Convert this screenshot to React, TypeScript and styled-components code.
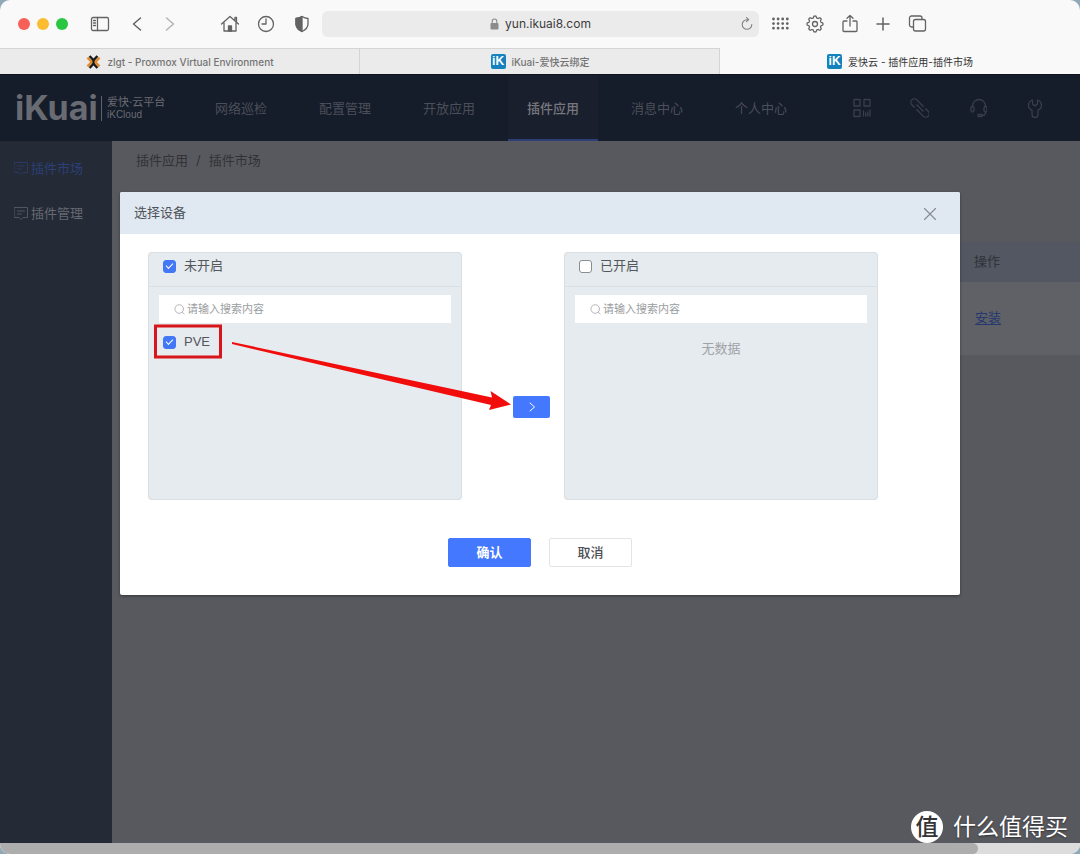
import React from "react";
import styled, { createGlobalStyle, css } from "styled-components";

const sans = `Inter, "Noto Sans CJK SC", sans-serif`;

const GlobalStyle = createGlobalStyle`
  *, *::before, *::after { box-sizing: border-box; }
  body { margin: 0; background: #8fa9b8; font-family: ${sans}; font-size: 13px; }
  button, input { font-family: inherit; }
  button { border: 0; padding: 0; background: none; cursor: pointer; }
  svg { display: block; }
`;

const Window = styled.div`
  display: flex;
  flex-direction: column;
  min-height: 100vh;
  border-radius: 10px;
  overflow: hidden;
  background: #f9f9f9;
`;

/* ---------- browser chrome ---------- */

const Toolbar = styled.header`
  display: flex;
  align-items: center;
  height: 48px;
  padding: 0 153px 0 18px;
`;

const Lights = styled.div`
  display: flex;
  gap: 7px;
  margin-right: 22px;
`;

const Light = styled.button<{ $color: string }>`
  width: 12px;
  height: 12px;
  border-radius: 50%;
  background: ${(p) => p.$color};
`;

const ToolGroup = styled.div<{ $gap: number; $before?: number }>`
  display: flex;
  gap: ${(p) => p.$gap}px;
  margin-left: ${(p) => p.$before ?? 0}px;
`;

const ToolButton = styled.button<{ $faded?: boolean }>`
  width: 20px;
  height: 20px;
  color: ${(p) => (p.$faded ? "#b4b4b4" : "#636363")};
`;

const UrlBar = styled.div`
  flex: 1;
  display: grid;
  grid-template-columns: 1fr auto 1fr;
  align-items: center;
  height: 26px;
  margin: 0 12px 0 10px;
  border-radius: 6px;
  background: #ebebeb;
`;

const Address = styled.label`
  grid-column: 2;
  display: flex;
  align-items: center;
  gap: 6px;
`;

const AddressInput = styled.input`
  field-sizing: content;
  padding: 0;
  border: 0;
  outline: 0;
  background: none;
  color: #3c3c3c;
  font-size: 12px;
  line-height: 16px;
`;

const Reload = styled.button`
  justify-self: end;
  width: 14px;
  height: 14px;
  margin-right: 5px;
  color: #808080;
`;

const TabStrip = styled.nav`
  display: flex;
  height: 27px;
  border-bottom: 1px solid #10131d;
`;

const BrowserTab = styled.button<{ $active?: boolean }>`
  flex: 1;
  display: flex;
  align-items: center;
  justify-content: center;
  gap: 6px;
  border-top: 1px solid transparent;
  font-size: 10px;
  line-height: 16px;
  ${(p) =>
    p.$active
      ? css`
          color: #333;
        `
      : css`
          color: #747474;
          font-weight: 500;
          background: #ebebeb;
          border-top-color: #d4d4d4;
          box-shadow: inset -1px 0 #d4d4d4;
        `}
`;

const Favicon = styled.span`
  display: grid;
  place-items: center;
  width: 15px;
  height: 15px;
  border-radius: 2px;
  background: #1483bd;
  color: #fff;
  font: 700 12px/15px "Liberation Sans", sans-serif;
`;

/* ---------- site ---------- */

const Site = styled.div`
  position: relative;
  flex: 1;
  display: flex;
  flex-direction: column;
  background: #58595e;
`;

const TopBar = styled.div`
  display: flex;
  align-items: center;
  height: 66px;
  padding: 0 35px 0 15px;
  background: #151c2a;
`;

const Brand = styled.a`
  display: flex;
  align-items: center;
  width: 181px;
  color: #696b72;
  text-decoration: none;
`;

const Wordmark = styled.span`
  width: 82px;
  font-size: 34px;
  font-weight: 700;
  line-height: 34px;
`;

const BrandText = styled.span`
  display: flex;
  flex-direction: column;
  padding-left: 5px;
  margin-left: 4px;
  border-left: 1px solid #5f626a;
  font-size: 11px;
  line-height: 13px;
`;

const BrandLatin = styled.span`
  font: 10px/12px "Liberation Sans", sans-serif;
`;

const MainNav = styled.nav`
  display: flex;
  align-self: stretch;
  gap: 14px;
`;

const NavLink = styled.a<{ $active?: boolean }>`
  width: 90px;
  padding-top: 1px;
  border-bottom: 2px solid ${(p) => (p.$active ? "#2d3f75" : "transparent")};
  background: ${(p) => (p.$active ? "#1a1f2e" : "none")};
  color: ${(p) => (p.$active ? "#76777d" : "#4b4f59")};
  font-weight: ${(p) => (p.$active ? 500 : 400)};
  line-height: 64px;
  text-align: center;
  text-decoration: none;
`;

const Shortcuts = styled.div`
  display: flex;
  gap: 38px;
  margin-left: auto;
`;

const Shortcut = styled.button`
  width: 20px;
  height: 20px;
  color: #3a3f4a;
`;

const Columns = styled.div`
  flex: 1;
  display: flex;
`;

const SideBar = styled.nav`
  display: flex;
  flex-direction: column;
  gap: 25px;
  width: 112px;
  padding: 17px 0 0 13px;
  background: #242a36;
`;

const SideLink = styled.a<{ $active?: boolean }>`
  display: flex;
  align-items: center;
  gap: 2px;
  color: ${(p) => (p.$active ? "#2b4077" : "#666971")};
  line-height: 20px;
  text-decoration: none;

  svg {
    opacity: 0.7;
  }
`;

const Content = styled.main`
  flex: 1;
  padding: 9px 0 0 24px;
`;

const Crumbs = styled.nav`
  display: flex;
  gap: 8px;
  color: #303237;
  line-height: 20px;
`;

const CrumbLink = styled.a`
  color: inherit;
  text-decoration: none;
`;

const PluginTable = styled.table`
  width: 100%;
  margin-top: 72px;
  border-collapse: collapse;
  text-align: left;
`;

const HeadCell = styled.th`
  width: 106px;
  height: 40px;
  padding: 0 0 4px;
  background: #525762;
  color: #303339;
  font-weight: 400;
`;

const Cell = styled.td`
  height: 73px;
  padding: 0 0 4px 1px;
  background: #606166;
`;

const FillHead = styled(HeadCell)`
  width: auto;
`;

const InstallLink = styled.a`
  color: #25386f;
  text-underline-offset: 2px;
`;

/* ---------- dialog ---------- */

const DialogLayer = styled.div`
  position: absolute;
  inset: 0;
  padding-top: 117px;
`;

const Dialog = styled.section`
  width: min(840px, 100% - 40px);
  margin: 0 auto;
  border-radius: 2px;
  overflow: hidden;
  background: #fff;
  box-shadow: 0 1px 3px rgba(0, 0, 0, 0.4);
`;

const DialogHead = styled.header`
  display: flex;
  align-items: flex-start;
  justify-content: space-between;
  height: 42px;
  padding: 10px 23px 0 14px;
  background: #e0e8f2;
`;

const DialogTitle = styled.h2`
  margin: 0;
  color: #4f5257;
  font-size: 13px;
  font-weight: 400;
  line-height: 20px;
`;

const Close = styled.button`
  width: 14px;
  height: 14px;
  margin-top: 5px;
  color: #858b94;
`;

const DialogBody = styled.div`
  padding: 18px 28px 28px;
`;

const Transfer = styled.div`
  position: relative;
  display: flex;
`;

const Panel = styled.fieldset`
  flex: 0 1 314px;
  min-width: 0;
  height: 248px;
  margin: 0;
  padding: 0;
  border: 1px solid #d9dee2;
  border-radius: 4px;
  background: #e6ebef;
`;

const PanelHead = styled.div`
  height: 34px;
  padding: 3px 14px 0;
  border-bottom: 1px solid #d9dfe3;
`;

const CheckLabel = styled.label`
  display: flex;
  align-items: center;
  gap: 8px;
  color: #53565b;
  font-family: "Liberation Sans", "Noto Sans CJK SC", sans-serif;
  line-height: 20px;
`;

const CheckBox = styled.input`
  appearance: none;
  display: grid;
  place-items: center;
  width: 13px;
  height: 13px;
  margin: 0;
  border: 1px solid #8a8d92;
  border-radius: 3px;
  background: #fff;

  &:checked {
    border-color: #4277f5;
    background: #4277f5;
  }

  &:checked::after {
    content: "";
    width: 7px;
    height: 4px;
    margin-bottom: 2px;
    border: solid #fff;
    border-width: 0 0 1px 1px;
    transform: rotate(-45deg);
  }
`;

const SearchBox = styled.label`
  display: flex;
  align-items: center;
  gap: 2px;
  height: 28px;
  margin: 8px 10px 0;
  padding: 0 15px;
  background: #fff;
  color: #b4b7bb;
`;

const SearchInput = styled.input`
  flex: 1;
  min-width: 0;
  padding: 0;
  border: 0;
  outline: 0;
  font-size: 11px;
  line-height: 16px;

  &::placeholder {
    color: #9a9da1;
  }
`;

const Options = styled.div`
  padding: 9px 14px;
`;

const Empty = styled.p`
  margin: 15px 0 0;
  color: #a0a3a7;
  line-height: 20px;
  text-align: center;
`;

const MoveColumn = styled.div`
  flex: 0 0 102px;
  padding: 144px 0 0 51px;
`;

const MoveButton = styled.button`
  display: grid;
  place-items: center;
  width: 37px;
  height: 22px;
  border-radius: 2px;
  background: #4378ff;
  color: #fff;
`;

const Actions = styled.footer`
  display: flex;
  justify-content: center;
  gap: 18px;
  margin-top: 38px;
`;

const ActionButton = styled.button<{ $primary?: boolean }>`
  width: 83px;
  height: 29px;
  padding-bottom: 2px;
  border: 1px solid ${(p) => (p.$primary ? "#4378ff" : "#e3e4e6")};
  border-radius: 2px;
  background: ${(p) => (p.$primary ? "#4378ff" : "#fff")};
  color: ${(p) => (p.$primary ? "#fff" : "#4b4e53")};
  font-size: 13px;
  font-weight: ${(p) => (p.$primary ? 700 : 500)};
  line-height: 20px;
`;

const Callout = styled.svg`
  position: absolute;
  left: 0;
  top: 0;
  pointer-events: none;
`;

/* ---------- bottom of the window ---------- */

const Watermark = styled.div`
  position: absolute;
  right: 12px;
  bottom: 0;
  display: flex;
  align-items: center;
  gap: 10px;
  color: #fff;
  font-size: 23px;
  line-height: 32px;
  text-shadow: 0 1px 2px rgba(0, 0, 0, 0.5);
`;

const WatermarkBadge = styled.span`
  width: 32px;
  height: 32px;
  border-radius: 50%;
  background: #fff;
  color: #333;
  font-weight: 500;
  text-align: center;
  text-shadow: none;
`;

const ScrollTrack = styled.div`
  height: 11px;
  background: #dcdcdc;
`;

const ScrollThumb = styled.div`
  width: calc(100% - 102px);
  height: 11px;
  border-radius: 0 6px 6px 0;
  background: #adadad;
`;

/* ---------- drawings ---------- */

type IconProps = { children: React.ReactNode; size?: number; width?: number };

const Icon = ({ children, size = 20, width = 1.3 }: IconProps) => (
  <svg
    width={size}
    height={size}
    viewBox={`0 0 ${size} ${size}`}
    fill="none"
    stroke="currentColor"
    strokeWidth={width}
    strokeLinecap="round"
    strokeLinejoin="round"
    aria-hidden="true"
  >
    {children}
  </svg>
);

const gearPath = (() => {
  const steps = 96;
  const points: string[] = [];
  for (let i = 0; i < steps; i++) {
    const a = (i / steps) * Math.PI * 2;
    const r = 7.1 + 0.9 * Math.tanh(2.4 * Math.cos(a * 8));
    points.push(`${(10 + r * Math.cos(a)).toFixed(2)} ${(10 + r * Math.sin(a)).toFixed(2)}`);
  }
  return `M${points.join("L")}Z`;
})();

const ProxmoxMark = () => (
  <svg width="15" height="14" viewBox="0 0 15 14" fill="none" aria-hidden="true">
    <path d="M1.500 2.600 5.700 7 1.500 11.400M13.500 2.600 9.300 7l4.200 4.400" stroke="#e08a2c" strokeWidth="2.400" />
    <path d="M3.600 1 7.500 5.200 11.400 1M3.600 13l3.900-4.200L11.400 13" stroke="#1a1a1a" strokeWidth="2.400" />
    <path d="M7.500 4.500v5" stroke="#1a1a1a" strokeWidth="2" />
  </svg>
);

const NoteIcon = () => (
  <Icon size={16} width={1}>
    <path d="M1.500 2.500h13v10H10L8 14.500l-2-2H1.500zM4.500 6h7M4.500 9h4" />
  </Icon>
);

const Magnifier = () => (
  <Icon size={11} width={1}>
    <circle cx="5.200" cy="5" r="4.300" />
    <path d="m8.500 8.300 1.700 1.800" />
  </Icon>
);

/* ---------- data ---------- */

const navItems = ["网络巡检", "配置管理", "开放应用", "插件应用", "消息中心", "个人中心"];

const shortcuts = [
  {
    name: "二维码",
    art: (
      <path d="M3 1.500h6V8H3zM13 1.500h6V8h-6zM3 12h6v6.500H3zM12.500 13v5M14.700 15v3M16.800 14v4M19 12v6" />
    ),
  },
  {
    name: "链接",
    art: (
      <g transform="translate(1 0) rotate(45 10 10)">
        <path d="M11 6.500H2a3.500 3.500 0 0 0 0 7h3.500" />
        <path d="M9 13.500h9a3.500 3.500 0 0 0 0-7h-3.500" />
        <path d="M5.500 10h9" />
      </g>
    ),
  },
  {
    name: "客服",
    art: (
      <g transform="translate(2 0)">
        <path d="M3.500 8a6.500 6.500 0 0 1 13 0M3.500 8.500a1.500 1.500 0 0 0-1.500 1.500v2.500a1.500 1.500 0 0 0 3 0V10a1.500 1.500 0 0 0-1.500-1.500zM16.500 8.500A1.500 1.500 0 0 0 15 10v2.500a1.500 1.500 0 0 0 3 0V10a1.500 1.500 0 0 0-1.500-1.500zM16.500 14.500c0 2-1.500 3-3.500 3M9 16.500h4v2H9z" />
      </g>
    ),
  },
  {
    name: "工具",
    art: (
      <path d="M7.500 2v4l2.500 2 2.500-2V2c2.500 1 4 3 4 5.200 0 2.300-1.300 4-3.500 5v4.300a3 3 0 0 1-6 0v-4.300c-2.200-1-3.500-2.700-3.500-5C3.500 5 5 3 7.500 2z" />
    ),
  },
];

const PanelSearch = ({ name }: { name: string }) => (
  <SearchBox>
    <Magnifier />
    <SearchInput type="search" aria-label={name} placeholder="请输入搜索内容" />
  </SearchBox>
);

export default function App() {
  return (
    <Window>
      <GlobalStyle />
      <Toolbar>
        <Lights>
          <Light $color="#f75f58" aria-label="关闭窗口" />
          <Light $color="#fbbc2f" aria-label="最小化" />
          <Light $color="#2bc640" aria-label="全屏" />
        </Lights>
        <ToolGroup $gap={15}>
          <ToolButton aria-label="边栏">
            <Icon>
              <rect x="1.500" y="3.500" width="17" height="13" rx="1.500" />
              <path d="M7.500 3.500v13M3.500 6.500h2M3.500 9h2M3.500 11.500h2" />
            </Icon>
          </ToolButton>
          <ToolButton aria-label="后退">
            <Icon width={1.5}>
              <path d="m15.500 4-7 6 7 6" />
            </Icon>
          </ToolButton>
          <ToolButton $faded aria-label="前进">
            <Icon width={1.5}>
              <path d="m6.500 4 7 6-7 6" />
            </Icon>
          </ToolButton>
        </ToolGroup>
        <ToolGroup $gap={16} $before={40}>
          <ToolButton aria-label="主页">
            <Icon>
              <path d="M1.500 10 10 2.500l8.500 7.500M4 8.500v8.500h12V8.500M15 6.500v-3h1.500V8" />
              <path d="M8.500 17v-5h3v5z" fill="currentColor" />
            </Icon>
          </ToolButton>
          <ToolButton aria-label="历史记录">
            <Icon>
              <circle cx="10" cy="10" r="7.500" />
              <path d="M10 5v5H6" />
            </Icon>
          </ToolButton>
          <ToolButton aria-label="隐私报告">
            <Icon>
              <path d="M10 2.500c2 1.200 4 1.800 6 2V10c0 3.500-2.500 5.800-6 7.500C6.500 15.800 4 13.500 4 10V4.500c2-.2 4-.8 6-2z" />
              <path d="M10 2.500v15C6.500 15.800 4 13.500 4 10V4.500c2-.2 4-.8 6-2z" fill="currentColor" />
            </Icon>
          </ToolButton>
        </ToolGroup>
        <UrlBar>
          <Address>
            <svg width="9" height="12" viewBox="0 0 9 12" aria-hidden="true">
              <rect x="0.500" y="5" width="8" height="6.500" rx="1" fill="#8b8b8b" />
              <path d="M2.200 5V3.300a2.300 2.300 0 0 1 4.600 0V5" fill="none" stroke="#8b8b8b" strokeWidth="1.100" />
            </svg>
            <AddressInput aria-label="地址" defaultValue="yun.ikuai8.com" />
          </Address>
          <Reload aria-label="重新载入">
            <Icon size={14} width={1.1}>
              <path d="M11.800 7.500A4.800 4.800 0 1 1 7 2.700h1.500M6.500.7l2.200 2-2.200 2" />
            </Icon>
          </Reload>
        </UrlBar>
        <ToolGroup $gap={14}>
          <ToolButton aria-label="网格">
            <Icon width={2.8}>
              <path d="M2.500 5h0M7.100 5h0M11.700 5h0M16.300 5h0M2.500 9.600h0M7.100 9.600h0M11.700 9.600h0M16.300 9.600h0M2.500 14.200h0M7.100 14.200h0M11.700 14.200h0M16.300 14.200h0" />
            </Icon>
          </ToolButton>
          <ToolButton aria-label="设置">
            <Icon>
              <path d={gearPath} />
              <circle cx="10" cy="10" r="2.500" />
            </Icon>
          </ToolButton>
          <ToolButton aria-label="共享">
            <Icon>
              <path d="M8 7H5a1 1 0 0 0-1 1v8.500a1 1 0 0 0 1 1h12a1 1 0 0 0 1-1V8a1 1 0 0 0-1-1h-3M11 12V1.500M8 4.200l3-2.800 3 2.800" />
            </Icon>
          </ToolButton>
          <ToolButton aria-label="新建标签页">
            <Icon width={1.5}>
              <path d="M10 4v12M4 10h12" />
            </Icon>
          </ToolButton>
          <ToolButton aria-label="标签页概览">
            <Icon>
              <rect x="6.500" y="5.500" width="12" height="11.500" rx="2" />
              <path d="M6.500 13h-2a2 2 0 0 1-2-2V4a2 2 0 0 1 2-2H13a2 2 0 0 1 2 2v1.500" />
            </Icon>
          </ToolButton>
        </ToolGroup>
      </Toolbar>
      <TabStrip>
        <BrowserTab>
          <ProxmoxMark />
          zlgt - Proxmox Virtual Environment
        </BrowserTab>
        <BrowserTab>
          <Favicon>iK</Favicon>
          iKuai-爱快云绑定
        </BrowserTab>
        <BrowserTab $active>
          <Favicon>iK</Favicon>
          爱快云 - 插件应用-插件市场
        </BrowserTab>
      </TabStrip>

      <Site>
        <TopBar>
          <Brand href="#">
            <Wordmark>iKuai</Wordmark>
            <BrandText>
              爱快·云平台
              <BrandLatin>iKCloud</BrandLatin>
            </BrandText>
          </Brand>
          <MainNav>
            {navItems.map((item) => (
              <NavLink key={item} href="#" $active={item === "插件应用"}>
                {item}
              </NavLink>
            ))}
          </MainNav>
          <Shortcuts>
            {shortcuts.map((s) => (
              <Shortcut key={s.name} aria-label={s.name}>
                <Icon>{s.art}</Icon>
              </Shortcut>
            ))}
          </Shortcuts>
        </TopBar>
        <Columns>
          <SideBar>
            <SideLink href="#" $active>
              <NoteIcon />
              插件市场
            </SideLink>
            <SideLink href="#">
              <NoteIcon />
              插件管理
            </SideLink>
          </SideBar>
          <Content>
            <Crumbs>
              <CrumbLink href="#">插件应用</CrumbLink>
              <span>/</span>
              <CrumbLink href="#">插件市场</CrumbLink>
            </Crumbs>
            <PluginTable>
              <thead>
                <tr>
                  <FillHead />
                  <HeadCell>操作</HeadCell>
                </tr>
              </thead>
              <tbody>
                <tr>
                  <Cell />
                  <Cell>
                    <InstallLink href="#">安装</InstallLink>
                  </Cell>
                </tr>
              </tbody>
            </PluginTable>
          </Content>
        </Columns>

        <DialogLayer>
          <Dialog role="dialog" aria-labelledby="dialog-title">
            <DialogHead>
              <DialogTitle id="dialog-title">选择设备</DialogTitle>
              <Close aria-label="关闭">
                <Icon size={14} width={1.1}>
                  <path d="m1.500 1.500 11 11M12.500 1.500l-11 11" />
                </Icon>
              </Close>
            </DialogHead>
            <DialogBody>
              <Transfer>
                <Panel aria-label="未开启">
                  <PanelHead>
                    <CheckLabel>
                      <CheckBox type="checkbox" defaultChecked />
                      未开启
                    </CheckLabel>
                  </PanelHead>
                  <PanelSearch name="搜索未开启设备" />
                  <Options>
                    <CheckLabel>
                      <CheckBox type="checkbox" defaultChecked />
                      PVE
                    </CheckLabel>
                  </Options>
                </Panel>
                <MoveColumn>
                  <MoveButton aria-label="移到已开启">
                    <Icon size={12} width={1}>
                      <path d="m4 2 4.500 4L4 10" />
                    </Icon>
                  </MoveButton>
                </MoveColumn>
                <Panel aria-label="已开启">
                  <PanelHead>
                    <CheckLabel>
                      <CheckBox type="checkbox" />
                      已开启
                    </CheckLabel>
                  </PanelHead>
                  <PanelSearch name="搜索已开启设备" />
                  <Empty>无数据</Empty>
                </Panel>
                <Callout width="370" height="170" viewBox="0 0 370 170" aria-hidden="true">
                  <rect x="7.500" y="74" width="65" height="31" fill="none" stroke="#d8151a" strokeWidth="3" />
                  <path d="M84 90 344 145.500 342.500 139 363 152.500 341 158 343 153 84 92z" fill="#f20d0d" />
                </Callout>
              </Transfer>
              <Actions>
                <ActionButton $primary>确认</ActionButton>
                <ActionButton>取消</ActionButton>
              </Actions>
            </DialogBody>
          </Dialog>
        </DialogLayer>

        <Watermark>
          <WatermarkBadge>值</WatermarkBadge>
          什么值得买
        </Watermark>
      </Site>
      <ScrollTrack>
        <ScrollThumb />
      </ScrollTrack>
    </Window>
  );
}
